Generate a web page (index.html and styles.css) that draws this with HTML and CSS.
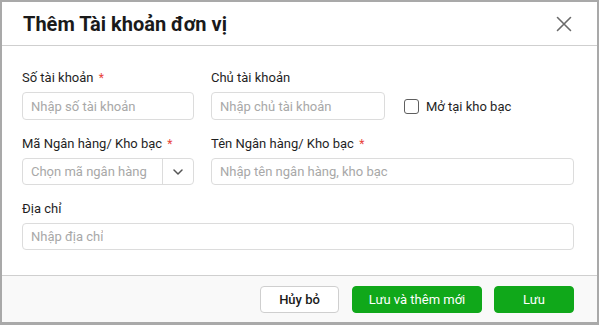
FILE: index.html
```html
<!DOCTYPE html>
<html lang="vi">
<head>
<meta charset="utf-8">
<title>Thêm Tài khoản đơn vị</title>
<link rel="stylesheet" href="styles.css">
</head>
<body>
<div class="dialog">
  <div class="header">
    <h1 class="title">Thêm Tài khoản đơn vị</h1>
    <button class="close" aria-label="Đóng">
      <svg width="16" height="16" viewBox="0 0 16 16"><path d="M1.5 1.5 L14.5 14.5 M14.5 1.5 L1.5 14.5" stroke="#6b6b6b" stroke-width="1.6" fill="none" stroke-linecap="round"/></svg>
    </button>
  </div>
  <div class="body">
    <div class="row row-1">
      <div class="field">
        <label class="label">Số tài khoản <span class="req">*</span></label>
        <div class="input"><span class="ph">Nhập số tài khoản</span></div>
      </div>
      <div class="field">
        <label class="label">Chủ tài khoản</label>
        <div class="input"><span class="ph">Nhập chủ tài khoản</span></div>
      </div>
      <div class="check">
        <span class="box"></span>
        <span class="check-text">Mở tại kho bạc</span>
      </div>
    </div>
    <div class="row row-2">
      <div class="field">
        <label class="label">Mã Ngân hàng/ Kho bạc <span class="req">*</span></label>
        <div class="input select">
          <span class="ph sel-text">Chọn mã ngân hàng</span>
          <span class="sel-btn">
            <svg width="10" height="6" viewBox="0 0 10 6"><path d="M1 1 L5 5 L9 1" stroke="#555" stroke-width="1.5" fill="none" stroke-linecap="round" stroke-linejoin="round"/></svg>
          </span>
        </div>
      </div>
      <div class="field">
        <label class="label">Tên Ngân hàng/ Kho bạc <span class="req">*</span></label>
        <div class="input"><span class="ph">Nhập tên ngân hàng, kho bạc</span></div>
      </div>
    </div>
    <div class="row row-3">
      <div class="field">
        <label class="label">Địa chỉ</label>
        <div class="input"><span class="ph">Nhập địa chỉ</span></div>
      </div>
    </div>
  </div>
  <div class="footer">
    <button class="btn btn-cancel">Hủy bỏ</button>
    <button class="btn btn-green btn-wide">Lưu và thêm mới</button>
    <button class="btn btn-green btn-save">Lưu</button>
  </div>
</div>
</body>
</html>
```
FILE: styles.css
```css
* { box-sizing: border-box; }
html, body { margin: 0; padding: 0; }
body {
  width: 599px;
  height: 325px;
  font-family: Roboto, "Liberation Sans", Arial, sans-serif;
  color: #212121;
  background: #fff;
}
.dialog {
  width: 599px;
  height: 325px;
  border: 2px solid #a9a9a9;
  border-bottom-width: 3px;
  display: flex;
  flex-direction: column;
  background: #fff;
}
.header {
  height: 44px;
  border-bottom: 1px solid #cfcfcf;
  display: flex;
  align-items: center;
  justify-content: space-between;
  padding: 0 25px 0 21px;
}
.title {
  margin: 0;
  font-size: 20px;
  font-weight: 700;
  color: #1a1a1a;
  line-height: 24px;
  padding-top: 1px;
}
.close {
  border: 0;
  background: none;
  padding: 0;
  width: 16px;
  height: 16px;
  display: flex;
  margin-top: 1px;
}
.body {
  flex: 1;
  padding: 21px 23px 0 20px;
  display: flex;
  flex-direction: column;
  gap: 13px;
}
.row {
  display: grid;
  column-gap: 17px;
}
.row-1 { grid-template-columns: 172px 174px 1fr; }
.row-2 { grid-template-columns: 172px 1fr; }
.row-3 { grid-template-columns: 1fr; }
.field {
  display: flex;
  flex-direction: column;
  gap: 3px;
}
.label {
  font-size: 13px;
  line-height: 22px;
  color: #1f1f1f;
}
.req {
  color: #e8433a;
  font-size: 12px;
  margin-left: 2px;
}
.input {
  height: 28px;
  border: 1px solid #dcdcdc;
  border-radius: 4px;
  display: flex;
  align-items: center;
  padding: 0 8px;
  background: #fff;
}
.row-2 .input, .row-3 .input { height: 27px; }
.ph {
  font-size: 13px;
  color: #a8a8a8;
  white-space: nowrap;
  overflow: hidden;
}
.select { padding-right: 0; }
.sel-text { flex: 1; }
.sel-btn {
  width: 31px;
  height: 100%;
  border-left: 1px solid #dcdcdc;
  display: flex;
  align-items: center;
  justify-content: center;
}
.check {
  display: flex;
  align-items: center;
  gap: 7px;
  align-self: end;
  height: 28px;
  margin-left: 2px;
}
.box {
  width: 15px;
  height: 15px;
  border: 1px solid #5f5f5f;
  border-radius: 3px;
  background: #fff;
}
.check-text {
  font-size: 13px;
  color: #1f1f1f;
}
.footer {
  height: 47px;
  border-top: 1px solid #cfcfcf;
  background: #f9f9f9;
  display: flex;
  justify-content: flex-end;
  align-items: flex-start;
  padding: 10px 23px 0 0;
  gap: 12px;
}
.btn {
  height: 27px;
  border-radius: 4px;
  font-family: Roboto, "Liberation Sans", Arial, sans-serif;
  font-size: 13px;
  padding: 0;
  cursor: pointer;
}
.btn-cancel {
  width: 79px;
  background: #fff;
  border: 1px solid #cfcfcf;
  color: #1a1a1a;
  font-weight: 500;
  margin-right: 1px;
}
.btn-green {
  background: #10a81a;
  border: 1px solid #10a81a;
  color: #fff;
  font-weight: 400;
}
.btn-wide { width: 130px; }
.btn-save { width: 80px; }
```
